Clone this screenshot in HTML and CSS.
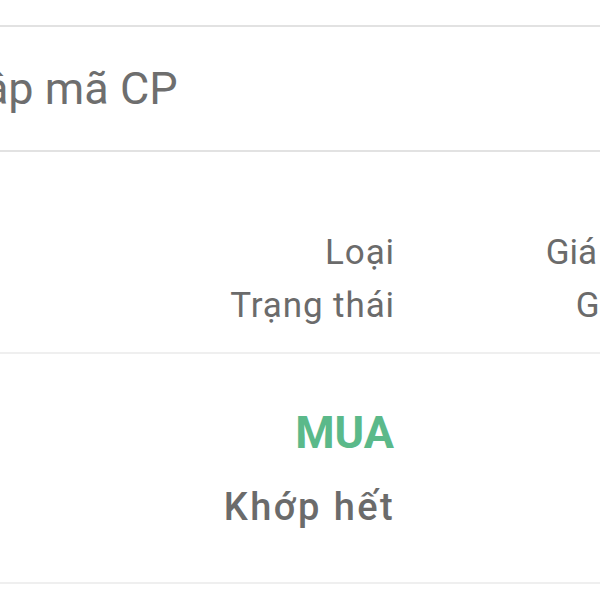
FILE: index.html
```html
<!DOCTYPE html>
<html lang="vi">
<head>
<meta charset="utf-8">
<link rel="stylesheet" href="styles.css">
</head>
<body>
<div class="page">
  <div class="search">
    <span class="placeholder">Nhập mã CP</span>
  </div>
  <div class="table-head">
    <div class="col col-type">
      <div class="head-line">Loại</div>
      <div class="head-line">Trạng thái</div>
    </div>
    <div class="col col-price">
      <div class="head-line">Giá đặt</div>
      <div class="head-line">Giá</div>
    </div>
  </div>
  <div class="table-row">
    <div class="col col-type">
      <div class="side buy">MUA</div>
      <div class="status">Khớp hết</div>
    </div>
    <div class="col col-price"></div>
  </div>
</div>
</body>
</html>
```

FILE: styles.css
```css
html, body {
  margin: 0;
  padding: 0;
  background: #ffffff;
}
body {
  width: 600px;
  height: 600px;
  overflow: hidden;
  font-family: Roboto, "Noto Sans", sans-serif;
  color: #6b6b6b;
}
.page {
  padding-top: 25px;
  width: 900px;
}
.search {
  height: 123px;
  border-top: 2px solid #e2e2e2;
  border-bottom: 2px solid #e2e2e2;
  display: flex;
  align-items: center;
  font-size: 45px;
}
.placeholder {
  margin-left: -73px;
  color: #6e6e6e;
}
.table-head {
  display: grid;
  grid-template-columns: 394px 409px;
  padding-top: 74px;
  padding-bottom: 20px;
  border-bottom: 2px solid #efefef;
}
.head-line {
  font-size: 35px;
  line-height: 53px;
  letter-spacing: 0.9px;
  white-space: nowrap;
}
.col-type {
  text-align: right;
}
.col-type .head-line,
.col-type .status {
  margin-right: -1px;
}
.col-price {
  text-align: center;
  padding-left: 6px;
}
.col-price .head-line {
  letter-spacing: 0;
}
.table-row {
  display: grid;
  grid-template-columns: 394px 409px;
  padding-top: 49px;
  padding-bottom: 45px;
  border-bottom: 2px solid #efefef;
}
.side {
  font-size: 45px;
  font-weight: 700;
  line-height: 60px;
}
.buy {
  color: #5bb98a;
}
.status {
  margin-top: 14px;
  font-size: 38px;
  font-weight: 500;
  line-height: 60px;
  letter-spacing: 2.4px;
  color: #6b6b6b;
}
```
